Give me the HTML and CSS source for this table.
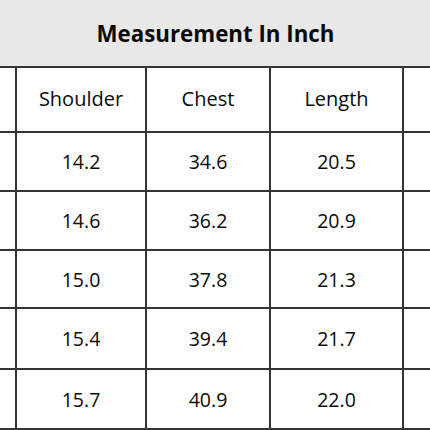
FILE: index.html
```html
<!DOCTYPE html>
<html lang="en">
<head>
<meta charset="utf-8">
<title>Measurement In Inch</title>
<link rel="stylesheet" href="styles.css">
</head>
<body>
<div class="page">
  <div class="title">Measurement In Inch</div>
  <div class="grid">
    <div class="cell head"></div><div class="cell head">Shoulder</div><div class="cell head">Chest</div><div class="cell head">Length</div><div class="cell head"></div>
    <div class="cell r1"></div><div class="cell r1">14.2</div><div class="cell r1">34.6</div><div class="cell r1">20.5</div><div class="cell r1"></div>
    <div class="cell r2"></div><div class="cell r2">14.6</div><div class="cell r2">36.2</div><div class="cell r2">20.9</div><div class="cell r2"></div>
    <div class="cell r3"></div><div class="cell r3">15.0</div><div class="cell r3">37.8</div><div class="cell r3">21.3</div><div class="cell r3"></div>
    <div class="cell r4"></div><div class="cell r4">15.4</div><div class="cell r4">39.4</div><div class="cell r4">21.7</div><div class="cell r4"></div>
    <div class="cell r5"></div><div class="cell r5">15.7</div><div class="cell r5">40.9</div><div class="cell r5">22.0</div><div class="cell r5"></div>
  </div>
</div>
</body>
</html>
```
FILE: styles.css
```css
html, body {
  margin: 0;
  padding: 0;
  background: #ffffff;
}
.page {
  width: 430px;
  height: 430px;
  overflow: hidden;
  font-family: "Open Sans", "Noto Sans", sans-serif;
  color: #0a0a0a;
}
.title {
  height: 66px;
  background: #e8e8e8;
  display: flex;
  align-items: center;
  justify-content: center;
  font-weight: 700;
  font-size: 22.3px;
  padding-left: 1px;
  box-sizing: border-box;
}
.grid {
  display: grid;
  grid-template-columns: 15px 128px 122px 131px 1fr;
  grid-template-rows: 63px 57px 57px 56px 59px 58px 10px;
  gap: 2px;
  padding-top: 2px;
  background: #333333;
}
.cell {
  background: #ffffff;
  display: flex;
  align-items: center;
  justify-content: center;
  font-size: 19.5px;
}
.head {
  font-size: 20px;
  padding-bottom: 2px;
}
```
